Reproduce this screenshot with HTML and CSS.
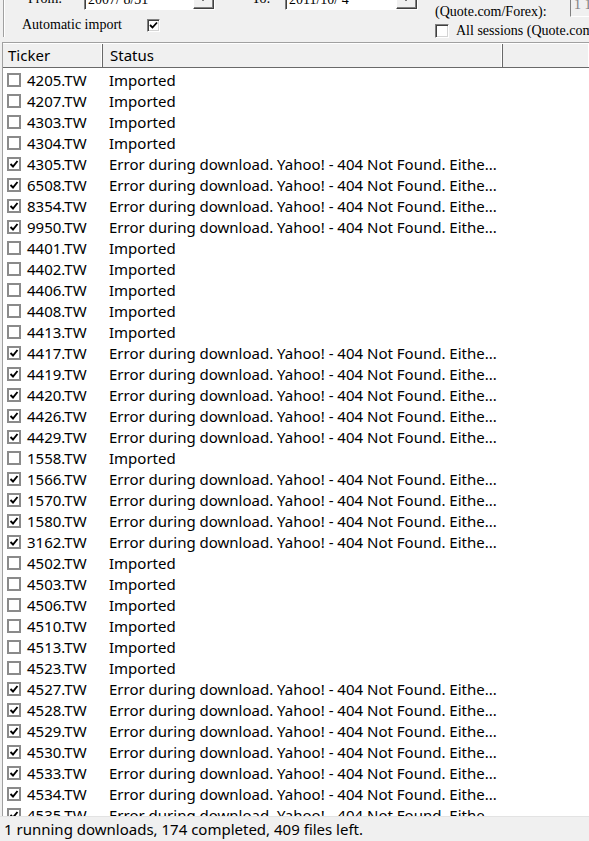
FILE: index.html
```html
<!DOCTYPE html>
<html lang="en">

<head>
  <meta charset="UTF-8">
  <title>Download</title>
  <link rel="stylesheet" href="styles.css">
</head>

<body>
  <div class="panel">
    <div class="group">
      <div class="line first">
        <span class="lbl from">From:</span>
        <div class="combo w1"><span>2007/ 8/31</span><i class="drop"></i></div>
        <span class="lbl to">To:</span>
        <div class="combo w2"><span>2011/10/ 4</span><i class="drop"></i></div>
      </div>
      <div class="line second">
        <span class="lbl">Automatic import</span>
        <span class="box3d auto"><svg viewBox="0 0 9 9"><path d="M1 4 L3.5 6.5 L8 1.5" /></svg></span>
      </div>
    </div>
    <div class="opts">
      <div class="line quote">
        <span class="lbl">(Quote.com/Forex):</span>
        <div class="edit">1 1</div>
      </div>
      <div class="line sess">
        <span class="box3d"></span>
        <span class="lbl">All sessions (Quote.com)</span>
      </div>
    </div>
  </div>

  <div class="list">
    <div class="head">
      <div class="col c1">Ticker</div>
      <div class="col c2">Status</div>
      <div class="col c3"></div>
    </div>
    <div id="rows" class="rows"></div>
  </div>

  <div class="status">1 running downloads, 174 completed, 409 files left.</div>

  <script>
    const err = 'Error during download. Yahoo! - 404 Not Found. Eithe...';
    // [ticker, failed]
    const data = [
      ['4205', 0], ['4207', 0], ['4303', 0], ['4304', 0],
      ['4305', 1], ['6508', 1], ['8354', 1], ['9950', 1],
      ['4401', 0], ['4402', 0], ['4406', 0], ['4408', 0], ['4413', 0],
      ['4417', 1], ['4419', 1], ['4420', 1], ['4426', 1], ['4429', 1],
      ['1558', 0],
      ['1566', 1], ['1570', 1], ['1580', 1], ['3162', 1],
      ['4502', 0], ['4503', 0], ['4506', 0], ['4510', 0], ['4513', 0], ['4523', 0],
      ['4527', 1], ['4528', 1], ['4529', 1], ['4530', 1], ['4533', 1], ['4534', 1], ['4535', 1]
    ];
    const check = '<svg viewBox="0 0 10 10"><path d="M1.5 5 L4 7.5 L8.5 2" /></svg>';
    let html = '';
    for (const d of data) {
      html += `<div class="row"><span class="cb">${d[1] ? check : ''}</span>` +
        `<span class="tick">${d[0]}.TW</span><span class="msg">${d[1] ? err : 'Imported'}</span></div>`;
    }
    document.getElementById('rows').innerHTML = html;
  </script>
</body>

</html>
```

FILE: styles.css
```css
html,
body {
  width: 100%;
  height: 100%;
  overflow: hidden;
}

body {
  margin: 0;
  display: flex;
  flex-direction: column;
  background-color: #f0f0f0;
  color: #000;
}

/* top options panel */
.panel {
  height: 42px;
  flex: none;
  display: flex;
  overflow: hidden;
  font-family: 'Liberation Serif', 'Noto Sans CJK TC', serif;
  font-size: 14px;
}

.group {
  margin-left: 3px;
  width: 417px;
  height: 37px;
  padding-left: 18px;
  border-left: 1px solid #a0a0a0;
  box-shadow: 1px 0 0 #fff inset;
}

.line {
  display: flex;
  align-items: center;
}

.first {
  height: 22px;
  margin-top: -12px;
}

.second {
  height: 14px;
  margin-top: 8px;
}

.from {
  margin-left: 6px;
  width: 56px;
}

.to {
  margin-left: 37px;
  width: 33px;
}

.combo {
  height: 22px;
  box-sizing: border-box;
  display: flex;
  background-color: #fff;
  border: 1px solid;
  border-color: #808080 #fff #fff #808080;
  box-shadow: 1px 1px 0 #404040 inset;
}

.combo span {
  flex: 1;
  padding: 3px 0 0 3px;
  line-height: 16px;
}

.w1 {
  width: 131px;
}

.w2 {
  width: 133px;
}

.drop {
  width: 19px;
  background-color: #f0f0f0;
  border: 1px solid;
  border-color: #fff #404040 #404040 #fff;
  box-shadow: -1px -1px 0 #808080 inset;
  position: relative;
}

.drop::after {
  content: '';
  position: absolute;
  left: 6px;
  top: 8px;
  border-left: 3px solid transparent;
  border-right: 3px solid transparent;
  border-top: 3px solid #000;
}

.auto {
  margin-left: 25px;
}

.box3d {
  width: 13px;
  height: 13px;
  box-sizing: border-box;
  background-color: #fff;
  border: 1px solid;
  border-color: #808080 #fff #fff #808080;
  box-shadow: 1px 1px 0 #404040 inset, -1px -1px 0 #d4d4d4 inset;
  display: inline-flex;
  align-items: center;
  justify-content: center;
}

.box3d svg {
  width: 9px;
  height: 9px;
  margin: 1px 0 0 1px;
}

.box3d path {
  fill: none;
  stroke: #000;
  stroke-width: 1.8;
}

.opts {
  margin-left: 17px;
  flex: 1;
  white-space: nowrap;
}

.quote {
  height: 22px;
  margin-top: 1px;
}

.quote .lbl {
  width: 135px;
}

.edit {
  height: 22px;
  margin-top: -12px;
  width: 60px;
  box-sizing: border-box;
  padding: 1px 3px;
  background-color: #f0f0f0;
  color: #808080;
  border: 1px solid;
  border-color: #808080 #fff #fff #808080;
}

.sess {
  height: 14px;
  margin-top: 1px;
}

.sess .box3d {
  width: 14px;
  height: 14px;
  margin-right: 7px;
}

/* ticker list */
.list {
  flex: 1;
  min-height: 0;
  margin-left: 2px;
  border-top: 1px solid #a0a0a0;
  border-left: 1px solid #a0a0a0;
  background-color: #fff;
  display: flex;
  flex-direction: column;
  font-family: 'Noto Sans', 'Open Sans', sans-serif;
  font-size: 15px;
}

.head {
  height: 23px;
  flex: none;
  display: flex;
  background-color: #f0f0f0;
  border-top: 1px solid #fff;
  border-bottom: 1px solid #696969;
}

.col {
  box-sizing: border-box;
  height: 100%;
  line-height: 22px;
  padding-left: 5px;
  border-right: 1px solid #696969;
  box-shadow: -1px 0 0 #fff inset;
}

.c1 {
  width: 100px;
}

.c2 {
  width: 400px;
  padding-left: 7px;
}

.c3 {
  flex: 1;
  border-right: none;
}

.rows {
  flex: 1;
  overflow: hidden;
  padding-top: 1px;
}

.row {
  height: 21px;
  display: flex;
  align-items: center;
  white-space: nowrap;
}

.cb {
  width: 14px;
  height: 14px;
  box-sizing: border-box;
  margin-left: 4px;
  border: 2px solid #8a8a8a;
  background-color: #fff;
  display: inline-flex;
  align-items: center;
  justify-content: center;
}

.cb svg {
  width: 10px;
  height: 10px;
}

.cb path {
  fill: none;
  stroke: #000;
  stroke-width: 1.9;
}

.tick {
  width: 82px;
  margin-left: 6px;
}

.msg {
  overflow: hidden;
}

/* bottom status bar */
.status {
  height: 25px;
  flex: none;
  box-sizing: border-box;
  padding: 2px 0 0 4px;
  border-top: 1px solid #e3e3e3;
  font-family: 'Noto Sans', 'Open Sans', sans-serif;
  font-size: 15px;
}
```
